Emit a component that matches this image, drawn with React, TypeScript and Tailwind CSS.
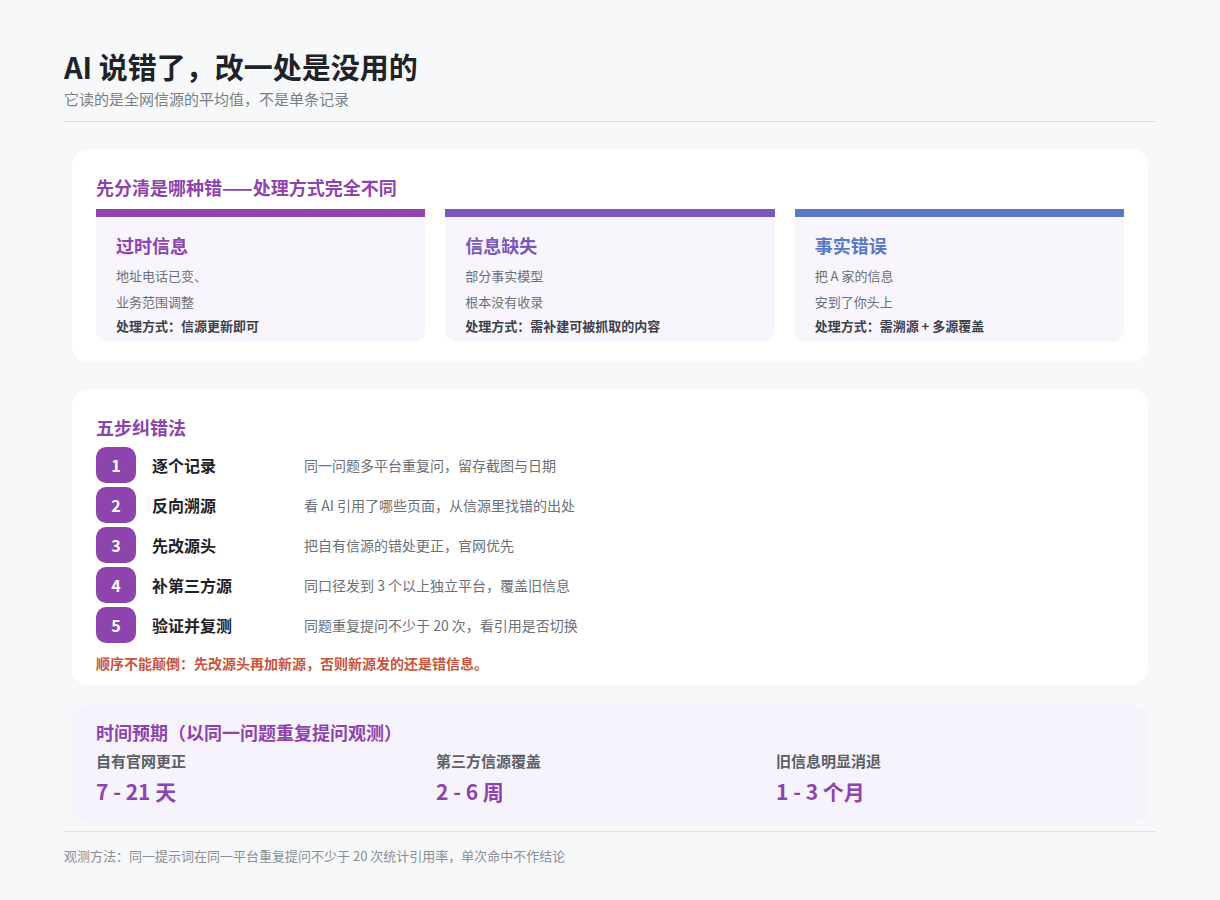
const F = { fontFamily: '"Noto Sans CJK SC","Noto Sans",sans-serif' };

const kinds = [
  { t: '过时信息', c: '#8e44ad', l: ['地址电话已变、', '业务范围调整'], h: '处理方式：信源更新即可' },
  { t: '信息缺失', c: '#7b59bb', l: ['部分事实模型', '根本没有收录'], h: '处理方式：需补建可被抓取的内容' },
  { t: '事实错误', c: '#5b78c8', l: ['把 A 家的信息', '安到了你头上'], h: '处理方式：需溯源 + 多源覆盖' },
];
const steps = [
  ['逐个记录', '同一问题多平台重复问，留存截图与日期'],
  ['反向溯源', '看 AI 引用了哪些页面，从信源里找错的出处'],
  ['先改源头', '把自有信源的错处更正，官网优先'],
  ['补第三方源', '同口径发到 3 个以上独立平台，覆盖旧信息'],
  ['验证并复测', '同题重复提问不少于 20 次，看引用是否切换'],
];
const times = [
  ['自有官网更正', '7 - 21 天'],
  ['第三方信源覆盖', '2 - 6 周'],
  ['旧信息明显消退', '1 - 3 个月'],
];

export default function App() {
  return (
    <div style={F} className="w-[1220px] h-[900px] bg-[#f7f8fa] px-[64px] pt-[44px]">
      <h1 className="text-[29px] font-bold text-[#1f2328] leading-[44px]">AI 说错了，改一处是没用的</h1>
      <p className="text-[15px] text-[#7a7f87] leading-[22px]">它读的是全网信源的平均值，不是单条记录</p>
      <div className="h-px bg-[#d8dbe0] mt-[11px]" />

      <div className="mx-[8px] mt-[27px] bg-white rounded-[16px] px-[24px] pt-[24px] pb-[20px]">
        <h2 className="text-[18px] font-bold text-[#8e44ad] leading-[28px]">先分清是哪种错——处理方式完全不同</h2>
        <div className="grid grid-cols-3 gap-[20px] mt-[8px]">
          {kinds.map((k) => (
            <div key={k.t} className="bg-[#f8f5fc] rounded-b-[12px] overflow-hidden h-[133px]">
              <div className="h-[8px]" style={{ background: k.c }} />
              <div className="px-[20px] pt-[14px]">
                <div className="text-[18px] font-bold leading-[28px]" style={{ color: k.c }}>{k.t}</div>
                <div className="mt-[4px] text-[13px] text-[#6b7079] leading-[26px]">
                  {k.l.map((x) => <div key={x}>{x}</div>)}
                </div>
                <div className="text-[13px] font-bold text-[#3d424a] leading-[22px]">{k.h}</div>
              </div>
            </div>
          ))}
        </div>
      </div>

      <div className="mx-[8px] mt-[27px] bg-white rounded-[16px] px-[24px] pt-[24px] pb-[4px] h-[296px]">
        <h2 className="text-[18px] font-bold text-[#8e44ad] leading-[28px]">五步纠错法</h2>
        <div className="mt-[6px] flex flex-col gap-[4px]">
          {steps.map(([a, b], i) => (
            <div key={a} className="flex items-center h-[36px]">
              <div className="w-[40px] h-[36px] rounded-[10px] bg-[#8e44ad] text-white font-bold text-[16px] flex items-center justify-center">{i + 1}</div>
              <div className="w-[168px] pl-[16px] text-[16px] font-bold text-[#1f2328]">{a}</div>
              <div className="text-[14px] text-[#6b7079]">{b}</div>
            </div>
          ))}
        </div>
        <p className="mt-[8px] text-[14px] font-bold text-[#c8553d] leading-[24px]">顺序不能颠倒：先改源头再加新源，否则新源发的还是错信息。</p>
      </div>

      <div className="mx-[8px] mt-[20px] bg-[#f7f3fc] rounded-[16px] px-[24px] pt-[13px] h-[118px]">
        <h2 className="text-[18px] font-bold text-[#8e44ad] leading-[28px]">时间预期（以同一问题重复提问观测）</h2>
        <div className="grid grid-cols-[340px_340px_1fr] mt-[4px]">
          {times.map(([a, b]) => (
            <div key={a}>
              <div className="text-[15px] font-bold text-[#5b6068] leading-[22px]">{a}</div>
              <div className="text-[21px] font-bold text-[#8e44ad] leading-[34px] mt-[2px]">{b}</div>
            </div>
          ))}
        </div>
      </div>

      <div className="h-px bg-[#e2e4e8] mt-[8px]" />
      <p className="mt-[14px] text-[13px] text-[#8a8f97]">观测方法：同一提示词在同一平台重复提问不少于 20 次统计引用率，单次命中不作结论</p>
    </div>
  );
}
